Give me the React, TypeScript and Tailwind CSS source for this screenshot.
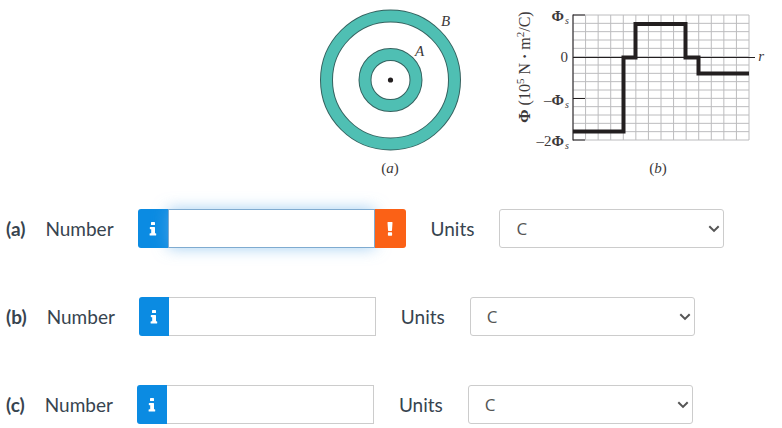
import React from "react";

const TEAL = "#4fbfb3";
const INK = "#231f20";
const SERIF = "font-['Liberation_Serif',serif]";

function InfoIcon() {
  return (
    <svg viewBox="0 0 8 14" className="h-[14px] w-[8px]" fill="currentColor" aria-hidden="true">
      <rect x="2" y="0" width="4" height="3" rx="0.6" />
      <path d="M1.4 5H5.4Q6 5 6 5.6V11.2H6.6Q7.2 11.2 7.2 11.8V12.9Q7.2 13.5 6.6 13.5H1.2Q.6 13.5 .6 12.9V11.8Q.6 11.2 1.2 11.2H2.2V7.2H1.4Q.8 7.2 .8 6.6V5.6Q.8 5 1.4 5Z" />
    </svg>
  );
}

function AlertIcon() {
  return (
    <svg viewBox="0 0 6 14" className="h-[14px] w-[6px]" fill="currentColor" aria-hidden="true">
      <path d="M1 0H5Q5.6 0 5.5.7L5 8.2Q5 8.9 4.4 8.9H1.6Q1 8.9 1 8.2L.5.7Q.4 0 1 0Z" />
      <rect x="0.9" y="10.3" width="4.2" height="3.4" rx="0.6" />
    </svg>
  );
}

function ShellsDiagram() {
  return (
    <svg viewBox="0 0 160 156" className="block h-[156px] w-[160px]" role="img" aria-label="Concentric shells A and B">
      <circle cx="80.5" cy="80" r="64" fill="none" stroke="#35625f" strokeWidth="13" />
      <circle cx="80.5" cy="80" r="64" fill="none" stroke={TEAL} strokeWidth="11" />
      <circle cx="80.5" cy="80" r="25.5" fill="none" stroke="#35625f" strokeWidth="13" />
      <circle cx="80.5" cy="80" r="25.5" fill="none" stroke={TEAL} strokeWidth="11" />
      <circle cx="80.5" cy="80" r="2.6" fill={INK} />
      <g className={SERIF} fontSize="15" fontStyle="italic" fill="#3d393a">
        <text x="131" y="26">B</text>
        <text x="105" y="56">A</text>
      </g>
    </svg>
  );
}

function FluxGraph() {
  const columns = Array.from({ length: 15 }, (_, i) => 63 + (i * 176) / 14);
  const rows = Array.from({ length: 16 }, (_, i) => 15 + (i * 125) / 15);
  const ticks = [
    { y: 15, sign: "" },
    { y: 98.5, sign: "–" },
    { y: 140, sign: "–2" },
  ];
  return (
    <svg viewBox="0 0 264 156" className="block h-[156px] w-[264px]" role="img" aria-label="Flux against radius">
      <g stroke="#bcbcbe" strokeWidth="1">
        {columns.map((x) => (
          <line key={x} x1={x} x2={x} y1="15" y2="140" />
        ))}
        {rows.map((y) => (
          <line key={y} x1="63" x2="239" y1={y} y2={y} />
        ))}
      </g>
      <g stroke={INK} strokeWidth="1">
        <line x1="63" x2="63" y1="14.5" y2="140.5" />
        <line x1="63" x2="245" y1="57.5" y2="57.5" />
        {ticks.map(({ y }) => (
          <line key={y} x1="63" x2="75" y1={y} y2={y} />
        ))}
      </g>
      <path
        d="M63 131.5H113.5V57.5H125.5V24H175.5V57.5H188.5V73.5H239"
        fill="none"
        stroke={INK}
        strokeWidth="4"
      />
      <g className={SERIF} fill="#3d393a" fontSize="15" textAnchor="end">
        {ticks.map(({ y, sign }) => (
          <g key={y}>
            <text x="54" y={y + 6}>
              {sign}
              <tspan fontWeight="bold">Φ</tspan>
            </text>
            <text x="59" y={y + 9} fontSize="10" fontStyle="italic">s</text>
          </g>
        ))}
        <text x="58" y="62">0</text>
        <text x="254" y="61" fontStyle="italic">r</text>
      </g>
      <text className={SERIF} fill="#3d393a" fontSize="16" textAnchor="middle" transform="translate(20 67) rotate(-90)">
        <tspan fontWeight="bold">Φ</tspan>
        <tspan> (10</tspan>
        <tspan fontSize="11" dy="-6">5</tspan>
        <tspan dy="6"> N </tspan>
        <tspan fontWeight="bold">·</tspan>
        <tspan> m</tspan>
        <tspan fontSize="11" dy="-6">2</tspan>
        <tspan dy="6">/C)</tspan>
      </text>
    </svg>
  );
}

function Caption({ letter }: { letter: string }) {
  return (
    <figcaption className={`${SERIF} text-center text-[15px] leading-6 text-[#3d393a]`}>
      (<i>{letter}</i>)
    </figcaption>
  );
}

function AnswerRow({ part, active = false }: { part: string; active?: boolean }) {
  const numberId = `number-${part}`;
  const unitsId = `units-${part}`;
  return (
    <div className="flex items-center">
      <span className="mr-5 font-bold">({part})</span>
      <label htmlFor={numberId} className="mr-6">Number</label>
      <div className="mr-[25px] flex h-[39px]">
        <button
          type="button"
          aria-label="Information"
          className="flex w-[30px] items-center justify-center rounded-l-[3px] bg-[#0b8be2] text-white"
        >
          <InfoIcon />
        </button>
        <input
          id={numberId}
          type="text"
          className={
            active
              ? "w-[207px] border border-[#7fabd0] bg-white px-3 shadow-[0_0_15px_rgba(102,175,233,0.6)] outline-none"
              : "w-[207px] border border-l-0 border-[#ccc] bg-white px-3 outline-none"
          }
        />
        {active && (
          <button
            type="button"
            aria-label="Error"
            className="relative flex w-[31px] items-center justify-center rounded-r-[3px] bg-[#fb6116] text-white"
          >
            <AlertIcon />
          </button>
        )}
      </div>
      <label htmlFor={unitsId} className="mr-[25px]">Units</label>
      <div className="relative">
        <select
          id={unitsId}
          className="h-[39px] w-[225px] appearance-none rounded-[3px] border border-[#ccc] bg-white px-4 font-['Open_Sans',sans-serif] text-[17px] text-[#555]"
        >
          <option>C</option>
        </select>
        <svg
          viewBox="0 0 12 8"
          className="pointer-events-none absolute top-4 right-1 h-2 w-3"
          fill="none"
          stroke="#555"
          strokeWidth="2"
          aria-hidden="true"
        >
          <path d="M1.3 1.2L6 5.9L10.7 1.2" />
        </svg>
      </div>
    </div>
  );
}

export default function App() {
  return (
    <main className="bg-white pb-1 font-['Lato',sans-serif] text-[19px] leading-6 text-[#37444f]">
      <div className="flex gap-10 pl-[310px]">
        <figure className="w-[160px]">
          <ShellsDiagram />
          <Caption letter="a" />
        </figure>
        <figure className="w-[264px]">
          <FluxGraph />
          <div className="pl-8">
            <Caption letter="b" />
          </div>
        </figure>
      </div>
      <form className="mt-[29px] flex flex-col gap-[49px] pl-[6px]">
        <AnswerRow part="a" active />
        <AnswerRow part="b" />
        <AnswerRow part="c" />
      </form>
    </main>
  );
}
